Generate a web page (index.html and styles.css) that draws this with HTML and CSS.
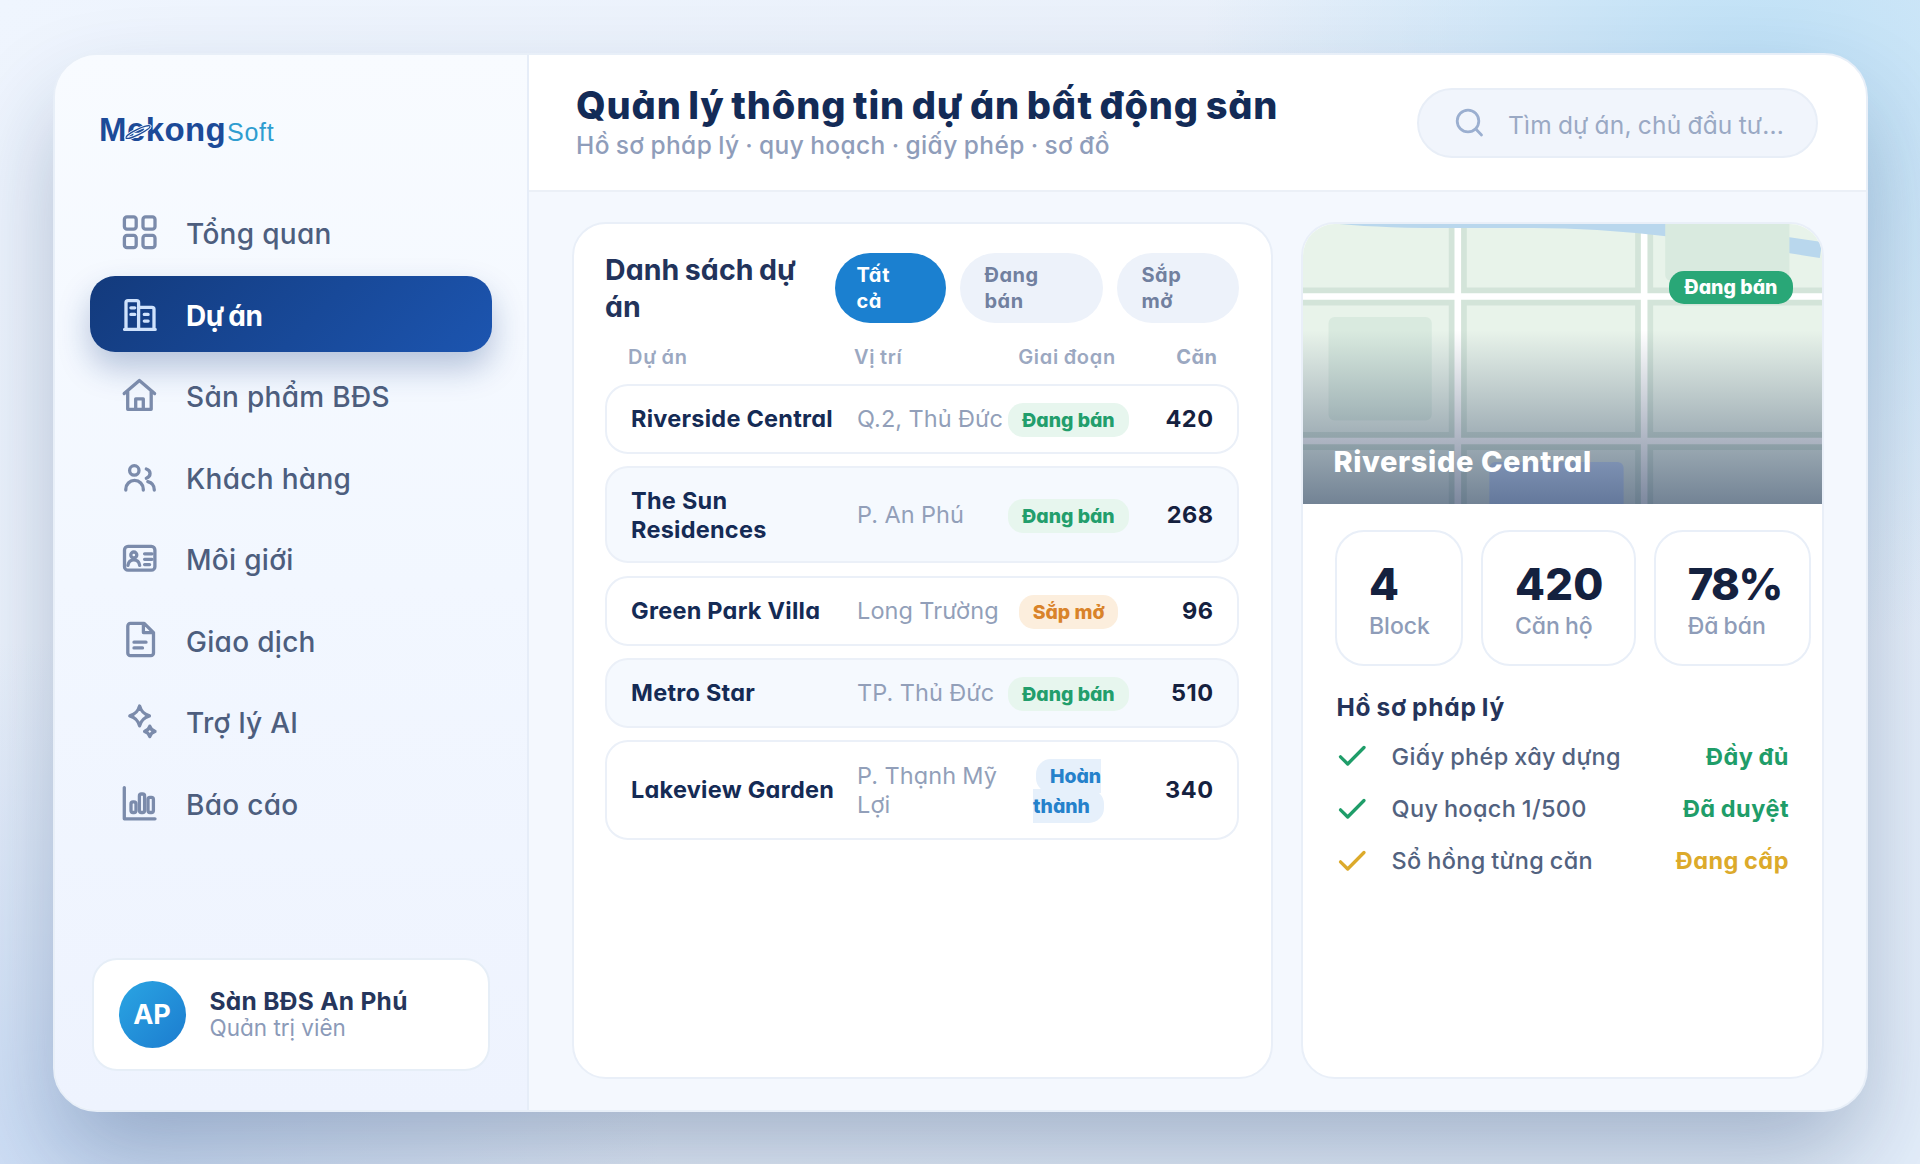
FILE: index.html
```
<!DOCTYPE html>
<html lang="vi">
<head>
<meta charset="UTF-8" />
<meta name="viewport" content="width=device-width, initial-scale=1" />
<title>MekongSoft - Quản lý dự án</title>
<link rel="stylesheet" href="styles.css">
</head>
<body>

<div class="window">
  <aside class="sidebar">
    <div class="logo">
      <span class="logo-main">Mekong</span><span class="logo-sub">Soft</span>
      <svg class="logo-ring" viewBox="0 0 30 20" width="30" height="20">
        <ellipse class="ring-gap" cx="15" cy="10" rx="13.4" ry="2.6" transform="rotate(-26 15 10)" />
        <ellipse cx="15" cy="10" rx="13.4" ry="2.6" transform="rotate(-26 15 10)" />
      </svg>
    </div>

    <nav class="nav">
      <a class="nav-item">
        <svg class="icon" viewBox="0 0 40 40"><rect x="4.4" y="4.8" width="11.8" height="12.3" rx="2.6" /><rect x="23" y="4.8" width="12" height="12.3" rx="2.6" /><rect x="4.4" y="23.4" width="11.8" height="12.3" rx="2.6" /><rect x="23" y="23.4" width="12" height="12.3" rx="2.6" /></svg>
        <span>Tổng quan</span>
      </a>
      <a class="nav-item active">
        <svg class="icon" viewBox="0 0 40 40"><path d="M4.6 35.4H35.2M6 35V8.6a2 2 0 0 1 2-2h8.6a2 2 0 0 1 2 2V35M18.6 13.3H32a2 2 0 0 1 2 2V35M10.9 13.8h3.8M10.9 20.4h3.8M24.3 20.4h3.8M24.3 27.1h3.8" /></svg>
        <span>Dự án</span>
      </a>
      <a class="nav-item">
        <svg class="icon" viewBox="0 0 40 40"><path d="M4.2 18.6 19.4 5.5 34.6 18.6M7.7 16V34.3H31.2V16M15.7 34V23.8h7.6V34" /></svg>
        <span>Sản phẩm BĐS</span>
      </a>
      <a class="nav-item">
        <svg class="icon" viewBox="0 0 40 40"><circle cx="14.3" cy="13.4" r="4.7" /><path d="M5.8 33v-.8a8.75 8.75 0 0 1 17.5 0v.8M26.3 12c5 1.6 5 7.6 0 9.2M27.8 24.6c4 1 6.5 4.2 6.5 8.4" /></svg>
        <span>Khách hàng</span>
      </a>
      <a class="nav-item">
        <svg class="icon" viewBox="0 0 40 40"><rect x="4.5" y="8.4" width="30.4" height="23.8" rx="3.5" /><circle cx="13.8" cy="17" r="3" /><path d="M7.9 27.4c.6-3.6 3-5.6 5.9-5.6s5.3 2 5.9 5.6M24.6 15.8h7.4M24.6 21.3h7.4M24.6 26.6h5" /></svg>
        <span>Môi giới</span>
      </a>
      <a class="nav-item">
        <svg class="icon" viewBox="0 0 40 40"><path d="M10.4 3.4H24.2L33.5 12.6V33a2.6 2.6 0 0 1-2.6 2.6H10.4A2.6 2.6 0 0 1 7.8 33V6a2.6 2.6 0 0 1 2.6-2.6ZM23.4 4v8.6h9.6M14 22.2h12M14 27.9h8.5" /></svg>
        <span>Giao dịch</span>
      </a>
      <a class="nav-item">
        <svg class="icon" viewBox="0 0 40 40"><path d="M19.6 5c1.6 5.4 3.8 7.9 9.8 9.9-6 2-8.2 4.5-9.8 9.9-1.6-5.4-3.8-7.9-9.8-9.9 6-2 8.2-4.5 9.8-9.9ZM29.8 25.2c.8 3 2.1 4.2 5.2 5.2-3.1 1-4.4 2.2-5.2 5.2-.8-3-2.1-4.2-5.2-5.2 3.1-1 4.4-2.2 5.2-5.2Z" /></svg>
        <span>Trợ lý AI</span>
      </a>
      <a class="nav-item">
        <svg class="icon" viewBox="0 0 40 40"><path d="M4.3 4.6V35.8H35" /><rect x="11" y="18.9" width="5" height="10.6" rx="2" /><rect x="19.4" y="11" width="5.2" height="18.5" rx="2" /><rect x="28" y="14.3" width="5.4" height="15.2" rx="2" /></svg>
        <span>Báo cáo</span>
      </a>
    </nav>

    <div class="user-card">
      <div class="avatar">AP</div>
      <div>
        <div class="user-name">Sàn BĐS An Phú</div>
        <div class="user-role">Quản trị viên</div>
      </div>
    </div>
  </aside>

  <main class="main">
    <header class="header">
      <div>
        <h1>Quản lý thông tin dự án bất động sản</h1>
        <p>Hồ sơ pháp lý · quy hoạch · giấy phép · sơ đồ</p>
      </div>
      <div class="search">
        <svg class="search-icon" viewBox="0 0 30 30"><circle cx="13" cy="13" r="10.8" /><path d="M20.8 21 26.5 27" /></svg>
        <span>Tìm dự án, chủ đầu tư...</span>
      </div>
    </header>

    <div class="content">
      <section class="panel list-panel">
        <div class="list-head">
          <h2>Danh sách dự án</h2>
          <div class="chips">
            <span class="chip chip-all active">Tất cả</span>
            <span class="chip chip-selling">Đang bán</span>
            <span class="chip chip-soon">Sắp mở</span>
          </div>
        </div>

        <div class="columns">
          <span>Dự án</span>
          <span>Vị trí</span>
          <span class="stage">Giai đoạn</span>
          <span class="units">Căn</span>
        </div>

        <div class="rows">
          <div class="row">
            <span class="name">Riverside Central</span>
            <span class="place">Q.2, Thủ Đức</span>
            <span class="stage"><span class="badge green">Đang bán</span></span>
            <span class="units">420</span>
          </div>
          <div class="row alt">
            <span class="name">The Sun Residences</span>
            <span class="place">P. An Phú</span>
            <span class="stage"><span class="badge green">Đang bán</span></span>
            <span class="units">268</span>
          </div>
          <div class="row">
            <span class="name">Green Park Villa</span>
            <span class="place">Long Trường</span>
            <span class="stage"><span class="badge orange">Sắp mở</span></span>
            <span class="units">96</span>
          </div>
          <div class="row alt">
            <span class="name">Metro Star</span>
            <span class="place">TP. Thủ Đức</span>
            <span class="stage"><span class="badge green">Đang bán</span></span>
            <span class="units">510</span>
          </div>
          <div class="row">
            <span class="name">Lakeview Garden</span>
            <span class="place">P. Thạnh Mỹ Lợi</span>
            <span class="stage"><span class="badge blue">Hoàn thành</span></span>
            <span class="units">340</span>
          </div>
        </div>
      </section>

      <section class="panel detail-panel">
        <div class="map">
          <svg class="map-art" viewBox="0 0 518 280" preserveAspectRatio="none">
            <rect width="518" height="280" fill="#e8f3ea" />
            <path d="M154.5 0V280M340.5 0V280M0 72.5H518M0 217H518" stroke="#d3e4d9" stroke-width="18" />
            <path d="M154.5 0V280M340.5 0V280M0 72.5H518M0 217H518" stroke="#fff" stroke-width="6.6" />
            <path d="M0 -13C60 -2 140 -4 230 -4S400 8 517 26" fill="none" stroke="#b9d7ed" stroke-width="16" />
            <path d="M361.5 0H485.5V51a6 6 0 0 1-6 6H367.5a6 6 0 0 1-6-6Z" fill="#d9eadf" />
            <rect x="25.5" y="93" width="103" height="103.5" rx="6" fill="#d9eadf" />
            <rect x="186" y="238" width="134" height="60" rx="6" fill="#c9dcf8" />
          </svg>
          <div class="map-shade"></div>
          <span class="map-badge">Đang bán</span>
          <div class="map-title">Riverside Central</div>
        </div>

        <div class="stats">
          <div class="stat"><b>4</b><span>Block</span></div>
          <div class="stat"><b>420</b><span>Căn hộ</span></div>
          <div class="stat"><b class="tight">78%</b><span>Đã bán</span></div>
        </div>

        <div class="legal">
          <h3>Hồ sơ pháp lý</h3>
          <div class="legal-row ok">
            <svg class="check" viewBox="0 0 30 24"><path d="M3.5 12.8 10.7 20 27 3.5" /></svg>
            <span>Giấy phép xây dựng</span><b>Đầy đủ</b>
          </div>
          <div class="legal-row ok">
            <svg class="check" viewBox="0 0 30 24"><path d="M3.5 12.8 10.7 20 27 3.5" /></svg>
            <span>Quy hoạch 1/500</span><b>Đã duyệt</b>
          </div>
          <div class="legal-row pending">
            <svg class="check" viewBox="0 0 30 24"><path d="M3.5 12.8 10.7 20 27 3.5" /></svg>
            <span>Sổ hồng từng căn</span><b>Đang cấp</b>
          </div>
        </div>
      </section>
    </div>
  </main>
</div>

</body>
</html>
```
FILE: styles.css
```
* {
  box-sizing: border-box;
}

body {
  margin: 0;
  height: 1164px;
  padding: 52.5px;
  overflow: hidden;
  font-family: Inter, "Noto Sans", sans-serif;
  font-feature-settings: "cv11" 1;
  color: #142850;
  background:
    radial-gradient(560px 560px at 1760px 90px, #bde0f6 0%, rgba(189, 224, 246, 0) 100%),
    radial-gradient(600px 500px at 60px 1140px, #cbdcf4 0%, rgba(203, 220, 244, 0) 100%),
    linear-gradient(135deg, #eff5fe 0%, #e8eff9 50%, #e4eefa 100%);
}

h1, h2, h3, p {
  margin: 0;
}

.window {
  display: flex;
  width: 1815px;
  height: 1059px;
  border: 2px solid #e8eff8;
  border-radius: 44px;
  overflow: hidden;
  background: #f4f8fe;
  box-shadow: 0 50px 100px -8px rgba(20, 50, 100, 0.32);
}

/* sidebar */
.sidebar {
  display: flex;
  flex-direction: column;
  width: 474.5px;
  padding: 0 35.5px 39px;
  border-right: 2px solid #e6edf8;
  background: linear-gradient(180deg, #f8fbff 0%, #f2f7ff 50%, #eef3fe 100%);
}

.logo {
  position: relative;
  height: 140px;
  padding: 56px 0 0 9px;
  font-family: "Liberation Sans", Arial, sans-serif;
  line-height: 38px;
  white-space: nowrap;
}

.logo-main {
  font-size: 33px;
  font-weight: 700;
  letter-spacing: 0.4px;
  color: #1c4a98;
}

.logo-sub {
  margin-left: 1px;
  font-size: 25px;
  letter-spacing: 0.7px;
  color: #2f9dd0;
}

.logo-ring {
  position: absolute;
  left: 33px;
  top: 67px;
  fill: none;
  stroke: #1c4a98;
  stroke-width: 1.3;
}

.ring-gap {
  stroke: #f7faff;
  stroke-width: 3;
}

.nav {
  display: flex;
  flex-direction: column;
  gap: 6px;
  flex: 1;
}

.nav-item {
  display: flex;
  align-items: center;
  gap: 26px;
  height: 75.5px;
  padding-left: 30px;
  border-radius: 25px;
  font-size: 28px;
  font-weight: 550;
  letter-spacing: 0.3px;
  color: #4d5e7e;
}

.nav-item span {
  padding-top: 4px;
}

.nav-item.active {
  color: #fff;
  font-weight: 700;
  letter-spacing: -0.5px;
  word-spacing: -1.5px;
  background: linear-gradient(135deg, #133a7c 0%, #1c55b0 100%);
  box-shadow: 0 16px 32px rgba(19, 58, 124, 0.28);
}

.icon {
  width: 40px;
  height: 40px;
  fill: none;
  stroke: #7b8bab;
  stroke-width: 3.3;
  stroke-linecap: round;
  stroke-linejoin: round;
}

.active .icon {
  stroke: #cfe2fc;
}

.user-card {
  display: flex;
  align-items: center;
  gap: 24px;
  height: 113px;
  margin: 0 1.5px;
  padding-left: 25px;
  border: 2px solid #e6eef7;
  border-radius: 25px;
  background: #fff;
}

.avatar {
  width: 67px;
  height: 67px;
  border-radius: 50%;
  background: linear-gradient(135deg, #2aa5e3, #1c7ccf);
  color: #fff;
  font-size: 27px;
  font-weight: 700;
  line-height: 67px;
  text-align: center;
}

.user-name {
  font-size: 24.5px;
  font-weight: 700;
  line-height: 28px;
  letter-spacing: 0.3px;
  color: #26365c;
}

.user-role {
  font-size: 22.5px;
  line-height: 26px;
  color: #8b9ab8;
}

/* header */
.main {
  display: flex;
  flex-direction: column;
  flex: 1;
}

.header {
  display: flex;
  align-items: center;
  justify-content: space-between;
  height: 137px;
  padding: 1px 47.5px 0 47px;
  border-bottom: 2px solid #ebf0f7;
  background: #fff;
}

.header h1 {
  font-size: 38px;
  font-weight: 780;
  line-height: 45px;
  letter-spacing: 0.85px;
  word-spacing: -2.5px;
  color: #132b57;
}

.header p {
  font-size: 24.5px;
  font-weight: 520;
  line-height: 34px;
  letter-spacing: 0.4px;
  word-spacing: -1px;
  color: #8f9dba;
}

.search {
  display: flex;
  align-items: center;
  gap: 23px;
  width: 401px;
  height: 70px;
  padding-left: 36px;
  border: 2px solid #e8eef7;
  border-radius: 35px;
  background: #f1f5fc;
  color: #9aa9c4;
  font-size: 24.5px;
  letter-spacing: 0.2px;
  word-spacing: -1px;
}

.search span {
  padding-top: 4px;
}

.search-icon {
  width: 30px;
  height: 30px;
  fill: none;
  stroke: #9bafd0;
  stroke-width: 2.8;
  stroke-linecap: round;
}

/* content */
.content {
  display: grid;
  grid-template-columns: 701px 523px;
  gap: 28px;
  flex: 1;
  padding: 30px 0 31px 42.5px;
}

.panel {
  border: 2px solid #e9eff8;
  border-radius: 34px;
  overflow: hidden;
  background: #fff;
}

.list-panel {
  padding: 27px 32px 0 31.5px;
}

.list-head {
  display: flex;
  align-items: center;
  justify-content: space-between;
}

.list-head h2 {
  width: 200px;
  font-size: 28.5px;
  font-weight: 700;
  line-height: 37.5px;
  letter-spacing: 0.1px;
  word-spacing: -1.5px;
  color: #22335b;
}

.chips {
  display: flex;
  gap: 14px;
}

.chip {
  height: 70px;
  padding: 9px 22px;
  border-radius: 35px;
  background: #edf2fa;
  color: #71809f;
  font-size: 20px;
  font-weight: 650;
  line-height: 26px;
  letter-spacing: 0.5px;
}

.chip.active {
  background: #1b80d0;
  color: #fff;
}

.chip-all {
  width: 111px;
  padding-right: 45px;
}

.chip-selling {
  width: 143px;
  padding: 9px 50px 9px 25px;
}

.chip-soon {
  width: 122px;
  padding: 9px 40px 9px 25px;
}

.columns, .row {
  display: grid;
  grid-template-columns: 226px 151px 120px 1fr;
  align-items: center;
}

.columns {
  margin: 17px 0 13.5px;
  padding: 0 21px 0 23px;
  font-size: 20px;
  font-weight: 620;
  line-height: 28px;
  letter-spacing: 0.7px;
  word-spacing: -1px;
  color: #9ba8c1;
}

.columns .stage {
  padding-left: 4px;
  white-space: nowrap;
}

.rows {
  display: flex;
  flex-direction: column;
  gap: 12.6px;
}

.row {
  padding: 18px 23px 18px 24px;
  border: 2px solid #ebf0f8;
  border-radius: 23px;
  font-size: 23.5px;
  line-height: 29px;
}

.row > span {
  margin: -0.4px 0;
}

.row.alt {
  background: #f5f9fe;
}

.name {
  padding-right: 15px;
  font-weight: 670;
  letter-spacing: 0.25px;
  color: #152b55;
}

.place {
  color: #929fb9;
  letter-spacing: 0.1px;
  word-spacing: -0.5px;
}

.stage {
  text-align: center;
}

.units {
  text-align: right;
  font-weight: 670;
  letter-spacing: 0.5px;
}

.row .units {
  color: #15213f;
}

.row .stage {
  margin: -1px -1px -1px 0;
  padding-top: 2px;
  line-height: 28.6px;
}

.badge {
  padding: 5px 14px;
  border-radius: 15px;
  font-size: 19.4px;
  font-weight: 760;
}

.green {
  background: #e7f6ee;
  color: #229e6c;
}

.orange {
  background: #fceedd;
  color: #d9832a;
}

.blue {
  background: #e6f0fb;
  color: #2581cb;
}

/* detail */
.map {
  position: relative;
  height: 280px;
}

.map-art {
  display: block;
  width: 100%;
  height: 280px;
}

.map-shade {
  position: absolute;
  inset: 0;
  background: linear-gradient(180deg, rgba(15, 36, 77, 0) 38%, rgba(15, 36, 77, 0.54) 100%);
}

.map-badge {
  position: absolute;
  top: 47px;
  right: 28.5px;
  padding: 0 15.5px;
  border-radius: 15px;
  background: #29a777;
  color: #fff;
  font-size: 19.5px;
  font-weight: 760;
  line-height: 33px;
}

.map-title {
  position: absolute;
  left: 31px;
  bottom: 24px;
  color: #fff;
  font-size: 29px;
  font-weight: 800;
  line-height: 36px;
  letter-spacing: 0.6px;
}

.stats {
  display: flex;
  gap: 18px;
  padding: 26px 0 0 32.5px;
}

.stat {
  display: flex;
  flex-direction: column;
  height: 136px;
  padding: 27px 30px 0 32px;
  border: 2px solid #e9eff8;
  border-radius: 29px;
}

.stat:first-child {
  padding-right: 31px;
}

.stat:last-child {
  padding-right: 27px;
}

.stat b {
  font-size: 43.5px;
  font-weight: 800;
  line-height: 51px;
  letter-spacing: 0.3px;
  color: #14213f;
}

.stat b.tight {
  letter-spacing: -1.5px;
}

.stat span {
  font-size: 23px;
  font-weight: 530;
  line-height: 32px;
  word-spacing: -1px;
  color: #8e9cb8;
}

.legal {
  padding: 24px 32.5px 0 34px;
}

.legal h3 {
  margin-bottom: 6.5px;
  font-size: 24.5px;
  font-weight: 720;
  line-height: 34px;
  letter-spacing: 0.8px;
  word-spacing: -1.5px;
  color: #25345a;
}

.legal-row {
  display: flex;
  align-items: center;
  height: 52.4px;
  font-size: 23.5px;
  letter-spacing: 0.35px;
}

.legal-row span {
  flex: 1;
  padding-left: 25px;
  font-weight: 530;
  word-spacing: -1px;
  color: #52627f;
}

.legal-row b {
  font-weight: 750;
  letter-spacing: 0.5px;
  word-spacing: -1px;
}

.check {
  width: 30px;
  height: 24px;
  fill: none;
  stroke: currentColor;
  stroke-width: 3.3;
  stroke-linecap: round;
  stroke-linejoin: round;
}

.ok {
  color: #1f9d69;
}

.pending {
  color: #dcaa2b;
}
```
